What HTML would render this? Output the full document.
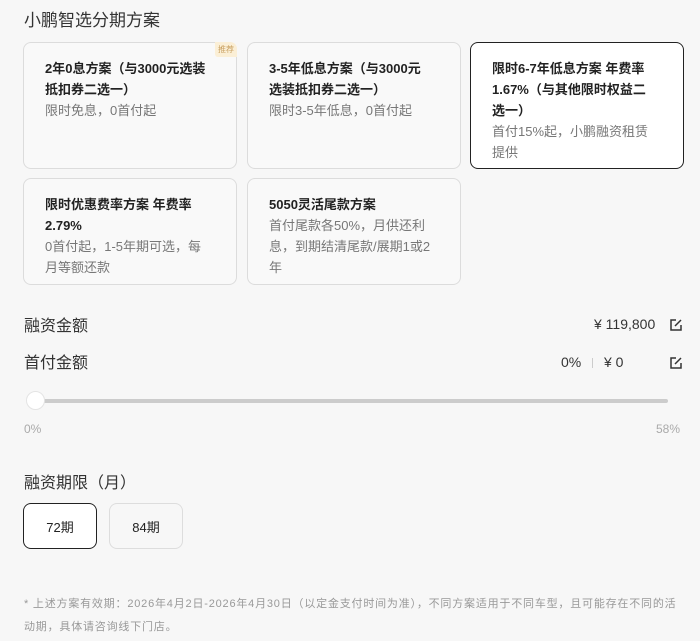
<!DOCTYPE html>
<html><head><meta charset="utf-8"><style>
*{margin:0;padding:0;box-sizing:border-box}
body{width:700px;height:641px;background:#f7f7f7;font-family:"Liberation Sans","Noto Sans CJK SC",sans-serif;color:#222;position:relative;overflow:hidden}
.a{position:absolute}
.card{position:absolute;border:1.5px solid #dcdcdc;border-radius:8px;background:#f9f9f9;padding:15px 0 0 21px}
.card.sel{border:1.5px solid #222;background:#fff}
.t{font-size:13px;font-weight:bold;line-height:21px;color:#222}
.d{font-size:13px;line-height:21px;color:#777}
.tag{position:absolute;right:-1px;top:-1px;background:#fbefd6;color:#c9a060;font-size:8px;padding:2px 3px;border-radius:0 7px 0 3px}
.btn{position:absolute;top:503px;width:74px;height:46px;border-radius:8px;border:1.5px solid #ddd;font-size:13px;display:flex;align-items:center;justify-content:center;background:#f7f7f7}
.ic{position:absolute;width:12px;height:12px}
</style></head><body>
<div class="a" style="left:24px;top:6px;font-size:17px;color:#333">小鹏智选分期方案</div>

<div class="card" style="left:23px;top:42px;width:214px;height:127px"><div class="tag">推荐</div><div class="t">2年0息方案（与3000元选装<br>抵扣券二选一）</div><div class="d">限时免息，0首付起</div></div>
<div class="card" style="left:247px;top:42px;width:214px;height:127px"><div class="t">3-5年低息方案（与3000元<br>选装抵扣券二选一）</div><div class="d">限时3-5年低息，0首付起</div></div>
<div class="card sel" style="left:470px;top:42px;width:214px;height:127px"><div class="t">限时6-7年低息方案 年费率<br>1.67%（与其他限时权益二<br>选一）</div><div class="d">首付15%起，小鹏融资租赁<br>提供</div></div>
<div class="card" style="left:23px;top:178px;width:214px;height:107px"><div class="t">限时优惠费率方案 年费率<br>2.79%</div><div class="d">0首付起，1-5年期可选，每<br>月等额还款</div></div>
<div class="card" style="left:247px;top:178px;width:214px;height:107px"><div class="t">5050灵活尾款方案</div><div class="d">首付尾款各50%，月供还利<br>息，到期结清尾款/展期1或2<br>年</div></div>

<div class="a" style="left:24px;top:312px;font-size:16px;color:#333">融资金额</div>
<div class="a" style="left:594px;top:316px;font-size:14px;color:#333">¥ 119,800</div>
<svg class="ic" style="left:670px;top:319px" viewBox="0 0 12 12"><path d="M6 1H1v10h10V6M5 7l6-6" fill="none" stroke="#333" stroke-width="1.5"/></svg>
<div class="a" style="left:24px;top:349px;font-size:16px;color:#333">首付金额</div>
<div class="a" style="left:561px;top:354px;font-size:14px;color:#333">0%</div>
<div class="a" style="left:592px;top:358px;width:1px;height:10px;background:#ccc"></div>
<div class="a" style="left:604px;top:354px;font-size:14px;color:#333">¥ 0</div>
<svg class="ic" style="left:670px;top:357px" viewBox="0 0 12 12"><path d="M6 1H1v10h10V6M5 7l6-6" fill="none" stroke="#333" stroke-width="1.5"/></svg>

<div class="a" style="left:30px;top:399px;width:638px;height:4px;border-radius:2px;background:#ccc"></div>
<div class="a" style="left:26px;top:391px;width:19px;height:19px;border-radius:50%;background:#fff;border:1px solid #e4e4e4"></div>
<div class="a" style="left:24px;top:422px;font-size:12px;color:#aaa">0%</div>
<div class="a" style="left:656px;top:422px;font-size:12px;color:#aaa">58%</div>

<div class="a" style="left:24px;top:469px;font-size:16px;color:#333">融资期限（月）</div>
<div class="btn" style="left:23px;border-color:#222;background:#fff">72期</div>
<div class="btn" style="left:109px">84期</div>

<div class="a" style="left:24px;top:593px;width:660px;font-size:11px;line-height:23px;color:#999;letter-spacing:0.8px">* 上述方案有效期：2026年4月2日-2026年4月30日（以定金支付时间为准），不同方案适用于不同车型，且可能存在不同的活动期，具体请咨询线下门店。</div>
</body></html>
